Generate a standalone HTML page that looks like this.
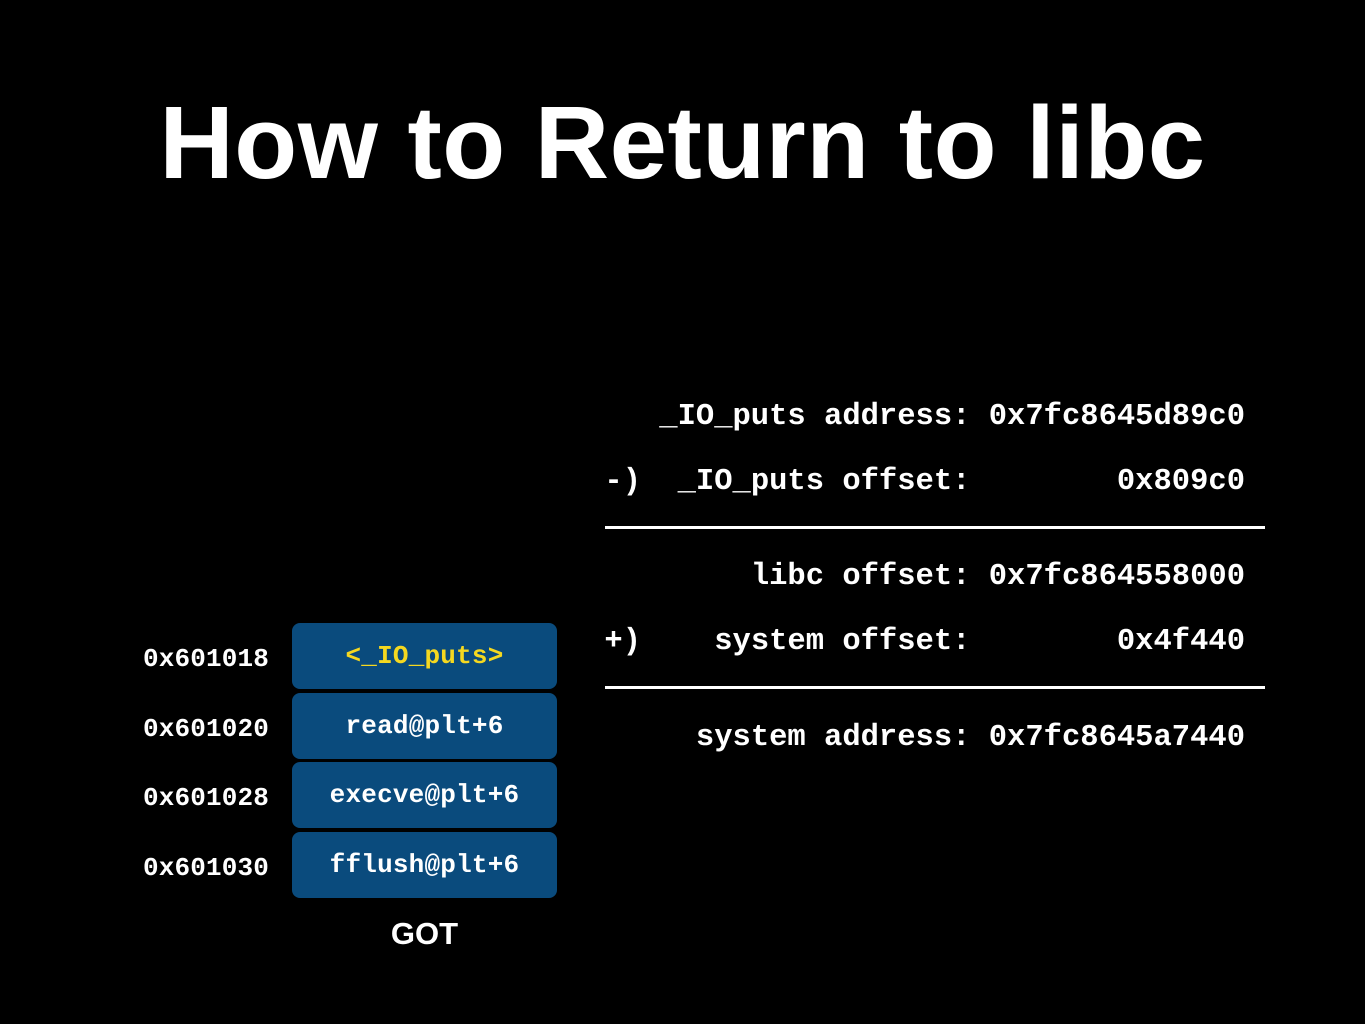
<!DOCTYPE html>
<html><head><style>
html,body{margin:0;padding:0;background:#000;}
body{width:1365px;height:1024px;position:relative;overflow:hidden;color:#fff;}
.t{position:absolute;left:0;width:1365px;text-align:center;top:91px;font:bold 103px/1 "Liberation Sans",sans-serif;letter-spacing:0.5px;}
.m{position:absolute;font-family:"Liberation Mono",monospace;white-space:pre;line-height:1;}
.r{right:120px;font-size:30.5px;letter-spacing:0px;font-weight:bold;}
.a{left:143px;font-size:26px;letter-spacing:0.15px;font-weight:bold;}
.b{position:absolute;left:292px;width:265px;height:66px;background:#0a4b7d;border-radius:8px;text-align:center;line-height:66px;font-family:"Liberation Mono",monospace;font-size:26px;font-weight:bold;letter-spacing:0.2px;}
.ln{position:absolute;left:605px;width:660px;height:3px;background:#fff;}
</style></head><body>
<div class="t">How to Return to libc</div>
<div class="m r" style="top:402px">_IO_puts address: 0x7fc8645d89c0</div>
<div class="m r" style="top:467px">-)  _IO_puts offset:        0x809c0</div>
<div class="ln" style="top:526px"></div>
<div class="m r" style="top:562px">libc offset: 0x7fc864558000</div>
<div class="m r" style="top:627px">+)    system offset:        0x4f440</div>
<div class="ln" style="top:686px"></div>
<div class="m r" style="top:723px">system address: 0x7fc8645a7440</div>
<div class="m a" style="top:646px">0x601018</div>
<div class="m a" style="top:716px">0x601020</div>
<div class="m a" style="top:785px">0x601028</div>
<div class="m a" style="top:855px">0x601030</div>
<div class="b" style="top:623px;color:#f5d820">&lt;_IO_puts&gt;</div>
<div class="b" style="top:693px">read@plt+6</div>
<div class="b" style="top:762px">execve@plt+6</div>
<div class="b" style="top:832px">fflush@plt+6</div>
<div style="position:absolute;left:292px;width:265px;top:918px;text-align:center;font:bold 31px/1 'Liberation Sans',sans-serif;">GOT</div>
</body></html>
